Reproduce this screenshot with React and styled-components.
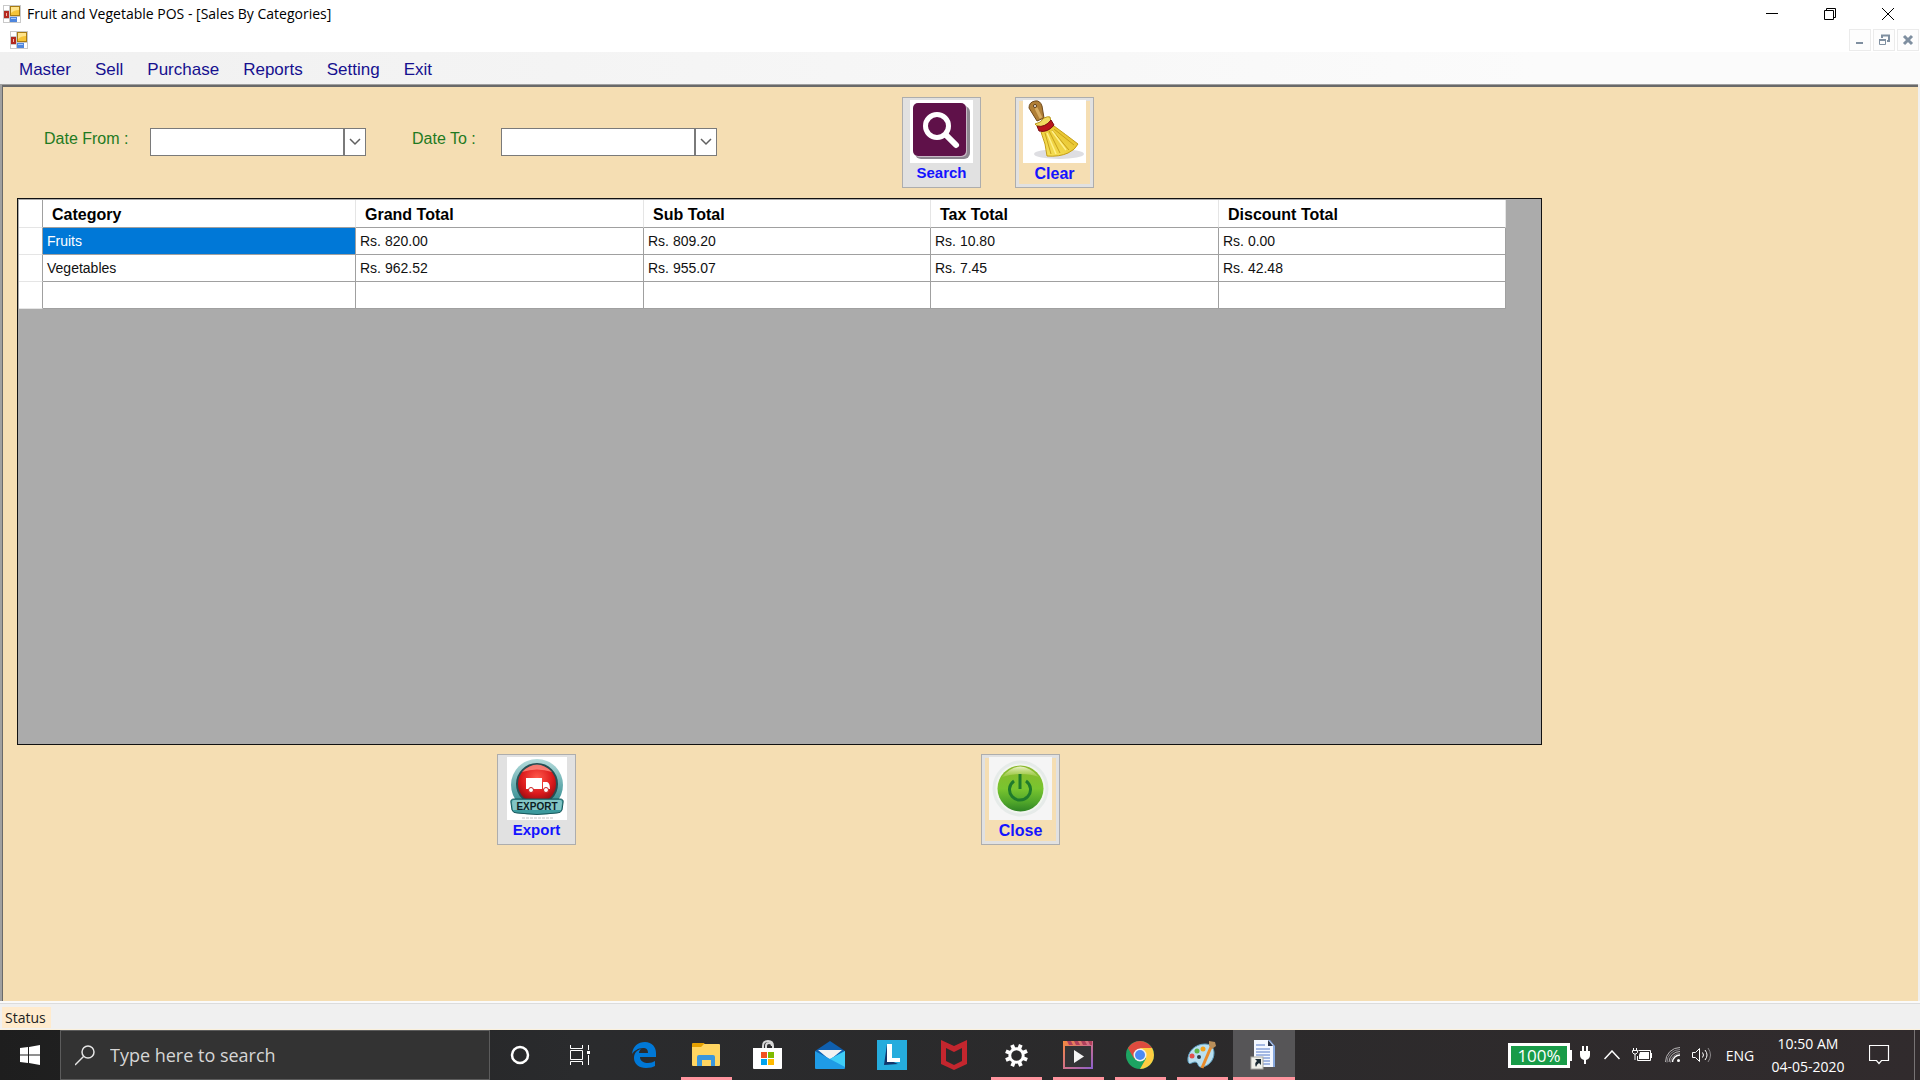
import React, { useState } from "react";
import styled, { createGlobalStyle, css } from "styled-components";

const GlobalStyle = createGlobalStyle`
  * {
    box-sizing: border-box;
  }
  body {
    margin: 0;
    background: #f0f0f0;
    font-family: "Liberation Sans", Arial, sans-serif;
  }
  button, input {
    font: inherit;
    margin: 0;
    padding: 0;
    border: 0;
    border-radius: 0;
    background: none;
    outline: none;
  }
  svg {
    display: block;
  }
`;

const uiFont = `"Open Sans", "Noto Sans", sans-serif`;

const Shell = styled.div`
  display: flex;
  flex-direction: column;
  min-height: 100vh;
`;

// window chrome
const TitleBar = styled.header`
  display: flex;
  align-items: center;
  height: 28px;
  padding: 0 3px;
  background: #fff;
`;

const Title = styled.h1`
  flex: 1;
  margin: 0 0 0 6px;
  font-family: ${uiFont};
  font-size: 14px;
  font-weight: 400;
  line-height: 20px;
  color: #000;
`;

const WindowButton = styled.button`
  display: flex;
  align-items: center;
  justify-content: center;
  width: 58px;
  height: 28px;
`;

const MdiBar = styled.div`
  display: flex;
  align-items: center;
  justify-content: space-between;
  height: 24px;
  padding: 0 1px 0 10px;
  background: #fff;
`;

const MdiButtons = styled.div`
  display: flex;
  gap: 2px;
`;

const MdiButton = styled.button`
  display: flex;
  align-items: center;
  justify-content: center;
  width: 22px;
  height: 22px;
  border: 1px solid #ebebeb;
  background: #fdfdfd;
`;

const MenuBar = styled.nav`
  display: flex;
  align-items: center;
  gap: 24px;
  height: 32px;
  padding: 4px 19px 0;
  background: linear-gradient(to right, #f0f0f0, #fbfbfb 80%);
`;

const MenuItem = styled.button`
  font-size: 17px;
  line-height: 20px;
  color: #16108f;
`;

const Canvas = styled.main`
  flex: 1;
  padding: 2px 16px 10px 15px;
  border: solid #a0a0a0;
  border-width: 1px 0 0 2px;
  margin-right: 2px;
  background: #f5deb3;
  box-shadow: inset 1px 2px 0 #696969;
`;

const FilterBar = styled.form`
  display: flex;
  align-items: center;
  padding: 10px 27px;
`;

const Field = styled.div`
  display: flex;
  align-items: flex-start;
  padding-bottom: 2px;
  margin-right: ${(p) => p.$gap};
`;

const FieldLabel = styled.label`
  width: ${(p) => p.$width};
  font-size: 16px;
  line-height: 22px;
  color: #1f7a1f;
`;

const DateBox = styled.div`
  display: flex;
  width: 216px;
  height: 28px;
  border: 1px solid #7a7a7a;
  background: #fff;
`;

const DateInput = styled.input`
  flex: 1;
  min-width: 0;
  padding: 0 6px;
  font-size: 16px;
`;

const DropButton = styled.button`
  display: flex;
  align-items: center;
  justify-content: center;
  width: 22px;
  border-left: 2px solid #7a7a7a;
`;

const PictureButton = styled.button`
  display: flex;
  flex-direction: column;
  align-items: center;
  width: 79px;
  height: 91px;
  margin-right: ${(p) => p.$gap || "0"};
  border: 1px solid #adadad;
  background: #e1e1e1;
  color: #1414ff;
  font-size: 15px;
  font-weight: 700;
  line-height: 20px;
  padding-top: 2px;

  ${(p) =>
    p.$sand &&
    css`
      background: #f5deb3;
      box-shadow: inset 0 0 0 3px #e1e1e1;
      font-size: 16px;
      line-height: 22px;
    `}
`;

const Actions = styled.div`
  display: flex;
  justify-content: center;
  gap: 405px;
  max-width: 1525px;
  padding: 9px 2px 0 0;
`;

const GridView = styled.div`
  width: 100%;
  max-width: 1525px;
  min-height: 547px;
  padding: 1px 0 0 1px;
  overflow-x: auto;
  border: 1px solid #111;
  background: #ababab;
`;

const Table = styled.table`
  width: 1487px;
  table-layout: fixed;
  border-collapse: separate;
  border-spacing: 0;
  background: #fff;
`;

const Corner = styled.td`
  border-right: 1px solid #a0a0a0;
  border-bottom: 1px solid #e5e5e5;
`;

const HeadCell = styled.th`
  height: 28px;
  padding: 3px 0 0 9px;
  border-right: 1px solid #e5e5e5;
  border-bottom: 1px solid #a0a0a0;
  font-size: 16px;
  line-height: 20px;
  text-align: left;
  color: #000;
`;

const Cell = styled.td`
  height: 27px;
  padding: 0 0 0 4px;
  border-right: 1px solid #a0a0a0;
  border-bottom: 1px solid #a0a0a0;
  font-size: 14px;
  line-height: 20px;
  color: ${(p) => (p.$selected ? "#fff" : "#111")};
  background: ${(p) => (p.$selected ? "#0078d7" : "#fff")};
`;

const StatusBar = styled.footer`
  display: flex;
  height: 29px;
  padding: 4px 2px 1px;
  border-top: 2px solid #fafafa;
  border-bottom: 1px solid #faf0dc;
  background: #f0f0f0;
  box-shadow: inset 0 1px 0 #dcdcdc;
`;

const StatusLabel = styled.span`
  padding: 0 5px 0 3px;
  font-family: ${uiFont};
  font-size: 14px;
  line-height: 22px;
  color: #222;
  background: #ffebcd;
`;

// taskbar
const Taskbar = styled.div`
  display: flex;
  height: 50px;
  background: linear-gradient(to right, #1e1e1e, #2a2b2d 30%, #2b2a2b 60%, #312b2d);
  font-family: ${uiFont};
  color: #fff;
`;

const TaskButton = styled.button`
  display: flex;
  align-items: center;
  justify-content: center;
  flex: none;
  width: 60px;
  height: 50px;
`;

const SearchBox = styled.label`
  display: flex;
  align-items: center;
  gap: 15px;
  width: 430px;
  padding-left: 14px;
  border: 1px solid #5c5c5c;
  background: #333;
`;

const SearchInput = styled.input`
  flex: 1;
  min-width: 0;
  font-size: 18px;
  color: #fff;

  &::placeholder {
    color: #d6d6d6;
    opacity: 1;
  }
`;

const Apps = styled.div`
  display: flex;
  flex: 1;
  padding-left: 3px;
`;

const AppButton = styled(TaskButton)`
  width: 62px;
  background: ${(p) => (p.$active ? "#565557" : "none")};
  position: relative;

  &::after {
    content: "";
    display: ${(p) => (p.$open || p.$active ? "block" : "none")};
    position: absolute;
    left: ${(p) => (p.$active ? "0" : "6px")};
    right: ${(p) => (p.$active ? "0" : "5px")};
    bottom: 0;
    height: 3px;
    background: #ff949e;
  }
`;

const Tray = styled.div`
  display: flex;
  align-items: center;
`;

const Battery = styled.div`
  width: 62px;
  height: 25px;
  border: 3px solid #fff;
  background: #189b48;
  font-size: 17px;
  line-height: 19px;
  text-align: center;
`;

const BatteryTip = styled.span`
  width: 2px;
  height: 11px;
  margin-right: 8px;
  background: #fff;
`;

const TrayIcon = styled.button`
  display: flex;
  margin-right: ${(p) => p.$gap || "12px"};
`;

const Language = styled.button`
  width: 32px;
  margin-right: 11px;
  font-size: 14px;
  color: #fff;
`;

const Clock = styled.time`
  width: 82px;
  font-size: 14px;
  line-height: 23px;
  text-align: center;
`;

const Notifications = styled.button`
  display: flex;
  margin: 0 24px 0 20px;
`;

const ShowDesktop = styled.button`
  align-self: stretch;
  width: 6px;
  border-left: 1px solid #777374;
`;

const FormIcon = () => (
  <svg width="18" height="18" viewBox="0 0 18 18" aria-hidden="true">
    <rect width="18" height="18" fill="#c9c9c9" />
    <path d="M1 1h5v4H1zM1 14h5v3H1zM14 12h3v5h-3z" fill="#fff" />
    <rect x="1" y="6" width="5" height="7" fill="#b3291f" />
    <path d="M3 8h1v3H3z" fill="#f6b4a8" />
    <rect x="7.500" y="1.500" width="9" height="9" fill="#f6c437" stroke="#a87b12" />
    <path d="M8 2h8v3q-5 0-8 3z" fill="#ffe48a" />
    <rect x="7" y="12" width="7" height="5" fill="#4f86dd" />
    <path d="M8 13h5v1H8z" fill="#a9c8f7" />
  </svg>
);

const SearchPicture = () => (
  <svg width="63" height="63" viewBox="0 0 63 63" aria-hidden="true">
    <rect width="63" height="63" fill="#fff" />
    <rect x="5" y="6" width="55" height="53" rx="6" fill="#8d8790" />
    <rect x="4" y="4" width="53" height="53" rx="5" fill="#c9b8c6" />
    <rect x="3" y="3" width="53" height="53" rx="5" fill="#5f1149" />
    <circle cx="27" cy="26" r="11.500" fill="none" stroke="#fff" strokeWidth="5" />
    <path d="M36 35l10 10" stroke="#fff" strokeWidth="6" strokeLinecap="round" />
  </svg>
);

const BroomPicture = () => (
  <svg width="63" height="63" viewBox="0 0 63 63" aria-hidden="true">
    <defs>
      <linearGradient id="broomStraw" x1="0" y1="1" x2="1" y2="0">
        <stop offset="0" stopColor="#f8e45c" />
        <stop offset="1" stopColor="#e3bb20" />
      </linearGradient>
    </defs>
    <rect width="63" height="63" fill="#fff" />
    <ellipse cx="36" cy="54" rx="25" ry="5" fill="#dedee2" />
    <path d="M6 8q0-6 6-7 5-1 7 5l2 12-7 3z" fill="#b07f36" stroke="#6e481b" />
    <path d="M13 8l5 10" stroke="#d8ad62" strokeWidth="3" />
    <circle cx="12" cy="6" r="1.500" fill="#fff" stroke="#5b3a15" />
    <path d="M12 24q6-1 9-6 4-2 6-1l1 5-12 6z" fill="#f1dc60" stroke="#b79216" />
    <path d="M18 32l13-6q11 8 24 18-3 6-10 9-9 4-21 3-1-12-6-24z" fill="url(#broomStraw)" stroke="#c49d17" />
    <path d="M22 33l6 21M26 31l11 22M29 30l17 20M31 29l20 16" stroke="#c9a11c" fill="none" />
    <path d="M24 33l9 21M29 31l14 19" stroke="#fff08a" strokeWidth="1.500" fill="none" />
    <path d="M14 26q8 2 14-6l3 5q-6 8-15 6z" fill="#b9151c" stroke="#7c0d10" />
  </svg>
);

const ExportPicture = () => (
  <svg width="60" height="63" viewBox="0 0 60 63" aria-hidden="true">
    <defs>
      <radialGradient id="exportRed" cx="50%" cy="35%" r="65%">
        <stop offset="0" stopColor="#ff5a4c" />
        <stop offset="0.600" stopColor="#dc1a1c" />
        <stop offset="1" stopColor="#8a0b10" />
      </radialGradient>
      <linearGradient id="exportTeal" x1="0" y1="0" x2="0" y2="1">
        <stop offset="0" stopColor="#b5dcdc" />
        <stop offset="1" stopColor="#1c7f83" />
      </linearGradient>
    </defs>
    <rect width="60" height="63" fill="#fff" />
    <circle cx="30" cy="28" r="26" fill="url(#exportTeal)" />
    <circle cx="30" cy="27" r="20" fill="url(#exportRed)" stroke="#274f54" strokeWidth="2" />
    <path d="M15 15q15-15 30 0-15-5-30 0z" fill="#ff9e92" opacity="0.700" />
    <path d="M19 21h16v11H19zM36 25h4q3 1 3 7h-7z" fill="#fff" />
    <circle cx="24" cy="33" r="2.500" fill="#fff" stroke="#c9201f" />
    <circle cx="39" cy="33" r="2.500" fill="#fff" stroke="#c9201f" />
    <path d="M7 42h46q4 0 3 4l-1 7q-1 3-5 3-20 3-40 0-4 0-5-3l-1-7q-1-4 3-4z" fill="#3b9a9d" stroke="#19575b" />
    <path d="M7 43h46q2 0 2 3l-1 7H6l-1-7q0-3 2-3z" fill="#83c5c5" />
    <text x="30" y="53" textAnchor="middle" fontFamily="Liberation Sans, sans-serif" fontWeight="700" fontSize="10" fill="#0d1d24">EXPORT</text>
    <path d="M15 61h31" stroke="#c4c4c4" strokeDasharray="3 1" />
  </svg>
);

const PowerPicture = () => (
  <svg width="63" height="63" viewBox="0 0 63 63" aria-hidden="true">
    <defs>
      <linearGradient id="powerGreen" x1="0" y1="0" x2="0" y2="1">
        <stop offset="0" stopColor="#8cb82c" />
        <stop offset="0.500" stopColor="#79c52f" />
        <stop offset="0.800" stopColor="#4fa52a" />
        <stop offset="1" stopColor="#2f8424" />
      </linearGradient>
      <linearGradient id="powerShine" x1="0" y1="0" x2="0" y2="1">
        <stop offset="0" stopColor="#f4f8d8" stopOpacity="0.900" />
        <stop offset="1" stopColor="#c5dc70" stopOpacity="0.300" />
      </linearGradient>
    </defs>
    <rect width="63" height="63" fill="#f5f5f5" />
    <circle cx="31.500" cy="31.500" r="28" fill="#e6ebe9" />
    <circle cx="31.500" cy="31.500" r="25" fill="#f1f5ef" />
    <circle cx="31.500" cy="31.500" r="23" fill="url(#powerGreen)" />
    <path d="M13 20q18-21 37 0-8-3-18-3t-19 3z" fill="url(#powerShine)" />
    <path d="M25 24a10.500 10.500 0 1 0 12 0" fill="none" stroke="#1f7a2c" strokeWidth="3" />
    <path d="M31 17v15" stroke="#1f7a2c" strokeWidth="3" />
  </svg>
);

const appIcons = [
  {
    name: "Edge",
    icon: (
      <svg width="26" height="28" viewBox="0 0 26 28">
        <path d="M1 13C2 5 7 1 14 1c7 0 11 5 11 11v4H9c0 4 4 6 8 6 3 0 5-1 7-2v5c-2 1-5 2-9 2-7 0-12-4-12-10 0-5 3-8 7-9-1 1-2 2-2 4h9c0-4-2-5-5-5-5 0-9 3-11 6z" fill="#0078d7" />
      </svg>
    ),
  },
  {
    name: "File Explorer",
    open: true,
    icon: (
      <svg width="28" height="24" viewBox="0 0 28 24">
        <path d="M0 1q0-1 1-1h11l2 3h-3l-2 2H0z" fill="#e5a000" />
        <path d="M0 4h9l3-3h15q1 0 1 1v20q0 1-1 1H1q-1 0-1-1z" fill="#ffd561" />
        <path d="M5 23V14q0-2 2-2h14q2 0 2 2v9h-4v-6H10v6z" fill="#3b97dd" />
      </svg>
    ),
  },
  {
    name: "Store",
    icon: (
      <svg width="30" height="30" viewBox="0 0 30 30">
        <path d="M10 9V6q0-5 5-5t5 5v3M13 9V6q0-3 3-3t3 3" fill="none" stroke="#d8d8d8" strokeWidth="2" />
        <path d="M0 8h29v20q0 1-1 1H1q-1 0-1-1z" fill="#fff" />
        <path d="M8 12h6v6H8z" fill="#f25022" />
        <path d="M15 12h6v6h-6z" fill="#7fba00" />
        <path d="M8 19h6v6H8z" fill="#00a4ef" />
        <path d="M15 19h6v6h-6z" fill="#ffb900" />
      </svg>
    ),
  },
  {
    name: "Mail",
    icon: (
      <svg width="30" height="28" viewBox="0 0 30 28">
        <path d="M0 10L15 0l15 10-15 10z" fill="#0f5fae" />
        <path d="M3 9h24L15 19z" fill="#f2f2f2" />
        <path d="M0 10l15 8 15-8v17q0 1-1 1H1q-1 0-1-1z" fill="#1f9be6" />
        <path d="M15 18l15-8v16z" fill="#3fcdf7" />
      </svg>
    ),
  },
  {
    name: "L",
    icon: (
      <svg width="30" height="30" viewBox="0 0 30 30">
        <rect width="30" height="30" fill="#25acdd" />
        <path d="M10 4l-3 21 14-1-9-4z" fill="#12356c" />
        <path d="M10 4h5v14h8v4H10z" fill="#fff" />
      </svg>
    ),
  },
  {
    name: "McAfee",
    icon: (
      <svg width="28" height="30" viewBox="0 0 28 30">
        <path d="M1 0l13 6 13-6v24l-13 6-13-6zM6 8v13l8 4 8-4V8l-8 4z" fill="#c4262e" fillRule="evenodd" />
      </svg>
    ),
  },
  {
    name: "Settings",
    open: true,
    icon: (
      <svg width="23" height="23" viewBox="-12 -12 24 24">
        <circle r="7" fill="none" stroke="#fff" strokeWidth="3" />
        {[22, 67, 112, 157, 202, 247, 292, 337].map((a) => (
          <rect key={a} x="-2" y="-12" width="4" height="5" fill="#fff" transform={`rotate(${a})`} />
        ))}
      </svg>
    ),
  },
  {
    name: "Video",
    open: true,
    icon: (
      <svg width="30" height="28" viewBox="0 0 30 28">
        <defs>
          <linearGradient id="videoFrame" x1="0" y1="0" x2="1" y2="1">
            <stop offset="0" stopColor="#f58a3c" />
            <stop offset="0.500" stopColor="#d07088" />
            <stop offset="1" stopColor="#8a5fcf" />
          </linearGradient>
        </defs>
        <rect width="30" height="28" fill="url(#videoFrame)" />
        <path d="M4 0h4l2 4H6zM11 0h4l2 4h-4zM18 0h4l2 4h-4zM25 0h4v4h-2z" fill="#b0405c" />
        <rect x="2" y="5" width="26" height="21" fill="#343436" />
        <path d="M11 9l10 6.500L11 22z" fill="#f5f5f5" />
      </svg>
    ),
  },
  {
    name: "Chrome",
    open: true,
    icon: (
      <svg width="28" height="28" viewBox="0 0 28 28">
        <circle cx="14" cy="14" r="14" fill="#1da462" />
        <path d="M14 14L8 17.500 1.900 7A14 14 0 0 1 26.100 7z" fill="#dd4b3e" />
        <path d="M14 7h12.100A14 14 0 0 1 14 28l6-10.500z" fill="#ffcd41" />
        <circle cx="14" cy="14" r="6.500" fill="#f1f1f1" />
        <circle cx="14" cy="14" r="5" fill="#4a8af4" />
      </svg>
    ),
  },
  {
    name: "Paint",
    open: true,
    icon: (
      <svg width="30" height="28" viewBox="0 0 30 28">
        <path d="M1 20C0 11 8 3 18 3c6 0 9 4 9 9 0 7-5 13-12 14-5 1-3-5-7-5-3 0-6 4-7-1z" fill="#b9dff0" stroke="#5d9fc0" />
        <circle cx="5" cy="15" r="2.500" fill="#e2504a" />
        <circle cx="10" cy="10" r="2.500" fill="#5cb548" />
        <circle cx="16" cy="8" r="2.500" fill="#f2a31d" />
        <circle cx="12" cy="16" r="2" fill="#2c3b44" />
        <path d="M24 6L15 27" stroke="#e88b2c" strokeWidth="3" />
        <path d="M22 0l6 1 1 4-4 3-3-3z" fill="#b98f5a" />
      </svg>
    ),
  },
  {
    name: "Document shortcut",
    active: true,
    icon: (
      <svg width="28" height="30" viewBox="0 0 28 30">
        <path d="M5 0h15l5 6v21H5z" fill="#86a7dd" />
        <path d="M4 0h14l5 5v22H4z" fill="#f3f7ff" />
        <path d="M18 0v6h5z" fill="#28334a" />
        <path d="M6 5h9M6 9h14M6 12h14M6 15h14M9 18h11M12 21h8M12 24h8" stroke="#5479c6" />
        <rect x="1" y="17" width="12" height="12" fill="#f0f0ea" stroke="#a9a9a4" />
        <path d="M5 19h6v6l-2-2q-2 1-3 4-2-4 1-6z" fill="#1b2a33" />
      </svg>
    ),
  },
];

const menus = ["Master", "Sell", "Purchase", "Reports", "Setting", "Exit"];

const columns = [
  { title: "Category", width: 313 },
  { title: "Grand Total", width: 288 },
  { title: "Sub Total", width: 287 },
  { title: "Tax Total", width: 288 },
  { title: "Discount Total", width: 287 },
];

const rows = [
  ["Fruits", "Rs. 820.00", "Rs. 809.20", "Rs. 10.80", "Rs. 0.00"],
  ["Vegetables", "Rs. 962.52", "Rs. 955.07", "Rs. 7.45", "Rs. 42.48"],
  ["", "", "", "", ""],
];

function DateField({ id, label, labelWidth, gap, value, onChange }) {
  return (
    <Field $gap={gap}>
      <FieldLabel htmlFor={id} $width={labelWidth}>
        {label}
      </FieldLabel>
      <DateBox>
        <DateInput id={id} type="text" value={value} onChange={(e) => onChange(e.target.value)} />
        <DropButton type="button" aria-label={"Open " + label}>
          <svg width="12" height="8" viewBox="0 0 12 8">
            <path d="M1 1l5 5 5-5" fill="none" stroke="#606060" strokeWidth="1.500" />
          </svg>
        </DropButton>
      </DateBox>
    </Field>
  );
}

function SalesGrid() {
  const [selected, setSelected] = useState("0-0");

  return (
    <GridView>
      <Table>
        <colgroup>
          <col style={{ width: 24 }} />
          {columns.map((c) => (
            <col key={c.title} style={{ width: c.width }} />
          ))}
        </colgroup>
        <thead>
          <tr>
            <Corner />
            {columns.map((c) => (
              <HeadCell key={c.title} scope="col">
                {c.title}
              </HeadCell>
            ))}
          </tr>
        </thead>
        <tbody>
          {rows.map((row, r) => (
            <tr key={r}>
              <Corner />
              {row.map((text, c) => (
                <Cell
                  key={c}
                  $selected={selected === `${r}-${c}`}
                  onClick={() => setSelected(`${r}-${c}`)}
                >
                  {text}
                </Cell>
              ))}
            </tr>
          ))}
        </tbody>
      </Table>
    </GridView>
  );
}

function WindowsTaskbar() {
  return (
    <Taskbar>
      <TaskButton aria-label="Start">
        <svg width="20" height="20" viewBox="0 0 20 20">
          <path d="M0 3l8-1v7.500H0zM9 2l11-2v9.500H9zM0 10.500h8V18l-8-1zM9 10.500h11V20L9 18z" fill="#fff" />
        </svg>
      </TaskButton>
      <SearchBox>
        <svg width="20" height="21" viewBox="0 0 20 21">
          <circle cx="13" cy="7" r="6" fill="none" stroke="#e6e6e6" strokeWidth="1.500" />
          <path d="M8.500 11.500L0 20" stroke="#e6e6e6" strokeWidth="1.500" />
        </svg>
        <SearchInput type="text" placeholder="Type here to search" aria-label="Type here to search" />
      </SearchBox>
      <TaskButton aria-label="Cortana">
        <svg width="20" height="20" viewBox="0 0 20 20">
          <circle cx="10" cy="10" r="8" fill="none" stroke="#fff" strokeWidth="2.500" />
        </svg>
      </TaskButton>
      <TaskButton aria-label="Task View">
        <svg width="21" height="20" viewBox="0 0 21 20">
          <path d="M0.500 0v3.500h12V0M0.500 20v-3.500h12V20M0.500 5.500h12v9H0.500zM18.500 0v5M18.500 10v10" fill="none" stroke="#fff" />
          <rect x="17" y="6" width="3" height="3" fill="#fff" />
        </svg>
      </TaskButton>
      <Apps>
        {appIcons.map((app) => (
          <AppButton key={app.name} aria-label={app.name} $open={app.open} $active={app.active}>
            {app.icon}
          </AppButton>
        ))}
      </Apps>
      <Tray>
        <Battery>100%</Battery>
        <BatteryTip />
        <TrayIcon aria-label="Power" $gap="14px">
          <svg width="10" height="18" viewBox="0 0 10 18">
            <path d="M2 0h2v5h2V0h2v5h2v4q0 4-4 5v4H4v-4q-4-1-4-5V5h2z" fill="#fff" />
          </svg>
        </TrayIcon>
        <TrayIcon aria-label="Show hidden icons">
          <svg width="16" height="10" viewBox="0 0 16 10">
            <path d="M0.500 9L8 1l7.500 8" fill="none" stroke="#fff" strokeWidth="1.500" />
          </svg>
        </TrayIcon>
        <TrayIcon aria-label="Battery">
          <svg width="21" height="14" viewBox="0 0 21 14">
            <path d="M6.500 2.500h12v10h-13V8M19.500 5v5" fill="none" stroke="#fff" />
            <path d="M8 4h9v7H7V7z" fill="#fff" />
            <path d="M1.500 0v2M4.500 0v2M0.500 2.500h5v2l-1.500 1.500h-2L0.500 4.500zM3 6v6" fill="none" stroke="#fff" />
          </svg>
        </TrayIcon>
        <TrayIcon aria-label="Network" $gap="11px">
          <svg width="16" height="16" viewBox="0 0 16 16">
            <path d="M0.500 15A14.500 14.500 0 0 1 15 0.500M4 15A11 11 0 0 1 15 4.500" fill="none" stroke="#b8b5b6" />
            <path d="M7.500 15A7.500 7.500 0 0 1 15 8" fill="none" stroke="#fff" strokeWidth="1.500" />
            <path d="M2 15.500A13 13 0 0 1 15 2.500M5.500 15.500A9.500 9.500 0 0 1 15 6.500" fill="none" stroke="#88858a" />
            <circle cx="13.500" cy="13.500" r="1.500" fill="#fff" />
          </svg>
        </TrayIcon>
        <TrayIcon aria-label="Volume">
          <svg width="20" height="16" viewBox="0 0 20 16">
            <path d="M0.500 5.500h3l4-4v13l-4-4h-3z" fill="none" stroke="#fff" />
            <path d="M10.500 5.500q2 2.500 0 5" fill="none" stroke="#fff" />
            <path d="M13 3q4 5 0 10" fill="none" stroke="#fff" />
            <path d="M16 1q5 7 0 14" fill="none" stroke="#8b888a" />
          </svg>
        </TrayIcon>
        <Language>ENG</Language>
        <Clock dateTime="2020-05-04T10:50">
          10:50 AM
          <br />
          04-05-2020
        </Clock>
        <Notifications aria-label="Notifications">
          <svg width="21" height="20" viewBox="0 0 21 20">
            <path d="M0.500 0.500h19v15h-7L10 18.500 7.500 15.500h-7z" fill="none" stroke="#fff" strokeWidth="1.200" />
          </svg>
        </Notifications>
        <ShowDesktop aria-label="Show desktop" />
      </Tray>
    </Taskbar>
  );
}

function App() {
  const [dateFrom, setDateFrom] = useState("");
  const [dateTo, setDateTo] = useState("");

  const handleClear = () => {
    setDateFrom("");
    setDateTo("");
  };

  return (
    <Shell>
      <GlobalStyle />
      <TitleBar>
        <FormIcon />
        <Title>Fruit and Vegetable POS - [Sales By Categories]</Title>
        <WindowButton aria-label="Minimize">
          <svg width="12" height="12" viewBox="0 0 12 12">
            <path d="M0 5.500h12" stroke="#000" />
          </svg>
        </WindowButton>
        <WindowButton aria-label="Restore">
          <svg width="12" height="12" viewBox="0 0 12 12">
            <path d="M0.500 2.500h9v9h-9zM2.500 2.500v-2h9v9h-2" fill="none" stroke="#000" />
          </svg>
        </WindowButton>
        <WindowButton aria-label="Close window">
          <svg width="12" height="12" viewBox="0 0 12 12">
            <path d="M0 0l12 12M12 0L0 12" stroke="#000" />
          </svg>
        </WindowButton>
      </TitleBar>
      <MdiBar>
        <FormIcon />
        <MdiButtons>
          <MdiButton aria-label="Minimize form">
            <svg width="12" height="12" viewBox="0 0 12 12">
              <path d="M2 8h7v2H2z" fill="#7f8fa0" />
            </svg>
          </MdiButton>
          <MdiButton aria-label="Restore form">
            <svg width="12" height="12" viewBox="0 0 12 12">
              <path d="M4 4V1.500h7V7H9" fill="none" stroke="#7f8fa0" strokeWidth="2" />
              <path d="M1.500 5.500h6v5h-6z" fill="none" stroke="#7f8fa0" />
              <path d="M1 5h7v2H1z" fill="#7f8fa0" />
            </svg>
          </MdiButton>
          <MdiButton aria-label="Close form">
            <svg width="12" height="12" viewBox="0 0 12 12">
              <path d="M2 2l8 8M10 2l-8 8" stroke="#7f8fa0" strokeWidth="3" />
            </svg>
          </MdiButton>
        </MdiButtons>
      </MdiBar>
      <MenuBar>
        {menus.map((name) => (
          <MenuItem key={name}>{name}</MenuItem>
        ))}
      </MenuBar>
      <Canvas>
        <FilterBar onSubmit={(e) => e.preventDefault()}>
          <DateField
            id="date-from"
            label="Date From :"
            labelWidth="106px"
            gap="46px"
            value={dateFrom}
            onChange={setDateFrom}
          />
          <DateField
            id="date-to"
            label="Date To :"
            labelWidth="89px"
            gap="185px"
            value={dateTo}
            onChange={setDateTo}
          />
          <PictureButton type="submit" $gap="34px">
            <SearchPicture />
            Search
          </PictureButton>
          <PictureButton type="button" $sand onClick={handleClear}>
            <BroomPicture />
            Clear
          </PictureButton>
        </FilterBar>
        <SalesGrid />
        <Actions>
          <PictureButton type="button">
            <ExportPicture />
            Export
          </PictureButton>
          <PictureButton type="button" $sand>
            <PowerPicture />
            Close
          </PictureButton>
        </Actions>
      </Canvas>
      <StatusBar>
        <StatusLabel>Status</StatusLabel>
      </StatusBar>
      <WindowsTaskbar />
    </Shell>
  );
}

export default App;
